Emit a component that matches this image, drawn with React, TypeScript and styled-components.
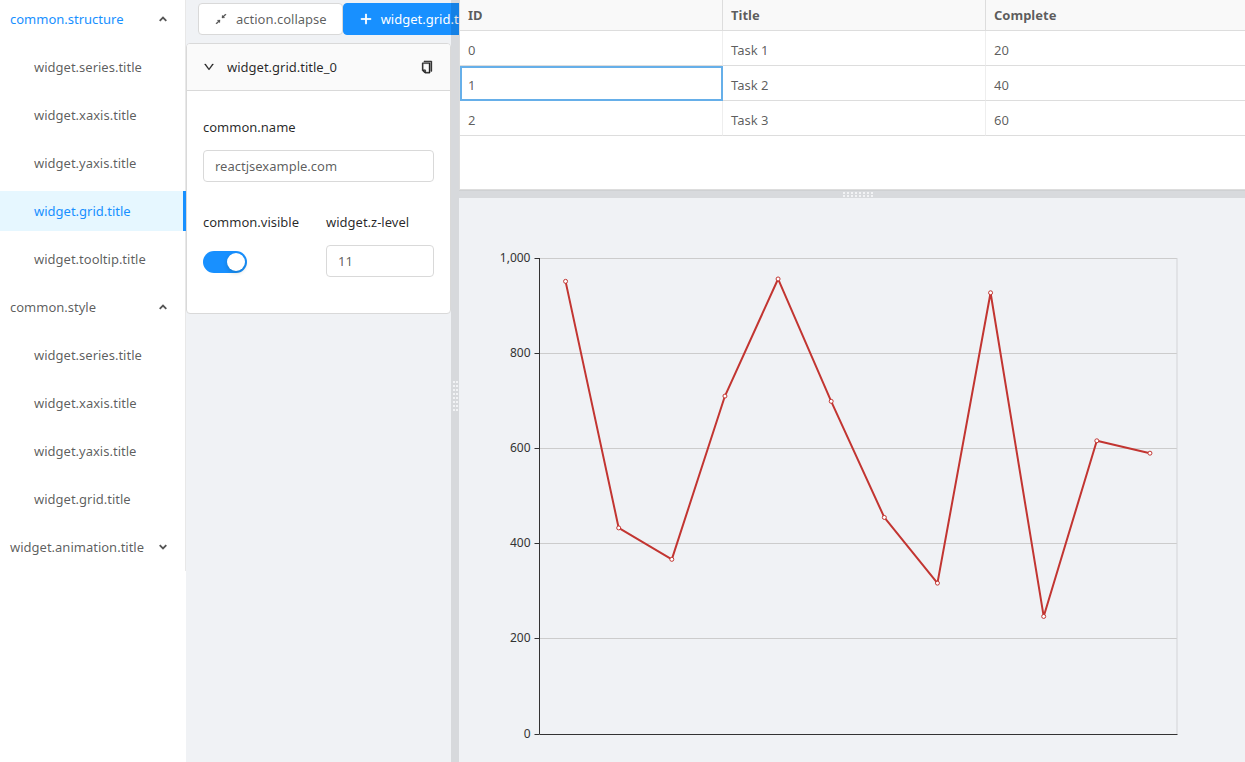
import React, { useEffect, useRef, useState } from 'react';
import styled, { createGlobalStyle } from 'styled-components';
import { AiOutlineCopy, AiOutlineDown, AiOutlinePlus, AiOutlineShrink } from 'react-icons/ai';

const GlobalStyle = createGlobalStyle`
  *, *::before, *::after { box-sizing: border-box; }
  body {
    margin: 0;
    overflow: hidden;
    background: #f0f2f5;
  }
  body, button, input {
    font-family: 'Noto Sans', 'Noto Sans CJK SC', sans-serif;
    font-size: 13px;
    line-height: 20px;
    color: rgba(0, 0, 0, 0.65);
  }
`;

const Shell = styled.div`
  height: 100vh;
  overflow: hidden;
`;

/* The workspace is a little larger than the window; the shell clips it. */
const Workspace = styled.div`
  display: flex;
  width: calc(100% + 12px);
  height: calc(100% + 30px);
`;

/* ---------- menu ---------- */

const Sidebar = styled.nav`
  flex: none;
  width: 186px;
  background: #fff;
`;

const Menu = styled.ul`
  list-style: none;
  margin: -1px 0 0;
  padding: 0 0 4px;
  display: grid;
  gap: 8px;
  border-right: 1px solid #e8e8e8;
`;

const SubMenu = styled.ul`
  list-style: none;
  margin: 8px 0 0;
  padding: 0;
  display: grid;
  gap: 8px;
`;

const MenuTitle = styled.button<{ $active?: boolean }>`
  display: flex;
  align-items: center;
  justify-content: space-between;
  width: 100%;
  height: 40px;
  padding: 0 18px 0 10px;
  border: 0;
  background: none;
  cursor: pointer;
  color: ${(p) => (p.$active ? '#1890ff' : 'rgba(0, 0, 0, 0.65)')};
`;

const MenuItem = styled.a<{ $selected?: boolean }>`
  display: flex;
  align-items: center;
  height: 40px;
  padding-left: 34px;
  text-decoration: none;
  color: ${(p) => (p.$selected ? '#1890ff' : 'rgba(0, 0, 0, 0.65)')};
  background: ${(p) => (p.$selected ? '#e6f7ff' : 'transparent')};
  ${(p) => p.$selected && 'margin-right: -1px; border-right: 3px solid #1890ff;'}
`;

const ArrowSvg = styled.svg<{ $open: boolean }>`
  transform: ${(p) => (p.$open ? 'none' : 'rotate(180deg)')};
`;

const Arrow = ({ open }: { open: boolean }) => (
  <ArrowSvg $open={open} width="8" height="6" viewBox="0 0 8 6" aria-hidden="true">
    <path d="M0.7 4.8 L4 1.5 L7.3 4.8" fill="none" stroke="#555" strokeWidth="1.8" />
  </ArrowSvg>
);

/* ---------- settings pane ---------- */

const SettingsPane = styled.section`
  position: relative;
  flex: none;
  width: 273px;
  padding-right: 8px;
  overflow: hidden;
`;

const Toolbar = styled.div`
  display: flex;
  padding: 3px 0 8px 12px;
`;

const ToolButton = styled.button<{ $primary?: boolean }>`
  flex: none;
  display: flex;
  align-items: center;
  gap: 8px;
  height: 32px;
  padding: 0 15px;
  border: 1px solid ${(p) => (p.$primary ? '#1890ff' : '#d9d9d9')};
  border-radius: 4px;
  background: ${(p) => (p.$primary ? '#1890ff' : '#fff')};
  color: ${(p) => (p.$primary ? '#fff' : 'rgba(0, 0, 0, 0.65)')};
  white-space: nowrap;
  cursor: pointer;

  svg {
    stroke-width: ${(p) => (p.$primary ? '60px' : '20px')};
  }
`;

const Card = styled.article`
  border: 1px solid #d9d9d9;
  border-radius: 4px;
  background: #fff;
  overflow: hidden;
`;

const CardHeader = styled.header`
  display: flex;
  align-items: center;
  justify-content: space-between;
  height: 47px;
  padding: 0 16px;
  border-bottom: 1px solid #d9d9d9;
  background: #fafafa;

  svg {
    stroke-width: 30px;
  }
`;

const CardToggle = styled.button`
  display: flex;
  align-items: center;
  gap: 12px;
  padding: 0;
  border: 0;
  background: none;
  color: rgba(0, 0, 0, 0.85);
  cursor: pointer;
`;

const IconButton = styled.button`
  display: flex;
  padding: 0;
  border: 0;
  background: none;
  color: rgba(0, 0, 0, 0.85);
  cursor: pointer;
`;

const CardBody = styled.form`
  display: grid;
  grid-template-columns: 1fr 1fr;
  gap: 20px 15px;
  padding: 16px 16px 36px;
`;

const Field = styled.div<{ $wide?: boolean }>`
  display: grid;
  align-content: start;
  justify-items: start;
  min-width: 0;
  ${(p) => p.$wide && 'grid-column: 1 / -1;'}
`;

const Label = styled.label`
  height: 40px;
  margin-bottom: 3px;
  line-height: 40px;
  color: rgba(0, 0, 0, 0.85);
  white-space: nowrap;
`;

const TextInput = styled.input`
  width: 100%;
  height: 32px;
  padding: 4px 11px;
  border: 1px solid #d9d9d9;
  border-radius: 4px;
  background: #fff;
`;

const Switch = styled.input`
  appearance: none;
  width: 44px;
  height: 22px;
  margin: 6px 0 0;
  padding: 2px;
  display: flex;
  justify-content: flex-start;
  border-radius: 11px;
  background: #bfbfbf;
  cursor: pointer;
  &::before {
    content: '';
    width: 18px;
    height: 18px;
    border-radius: 50%;
    background: #fff;
    box-shadow: 0 2px 4px rgba(0, 35, 11, 0.2);
  }
  &:checked {
    justify-content: flex-end;
    background: #1890ff;
  }
`;

/* ---------- splitters ---------- */

const SplitterColumn = styled.div`
  position: absolute;
  top: 0;
  right: 0;
  bottom: 0;
  width: 8px;
  display: flex;
  align-items: center;
  justify-content: center;
  background: rgba(0, 0, 0, 0.1);
  cursor: col-resize;
`;

const SplitterRow = styled.div`
  flex: none;
  height: 8px;
  display: flex;
  align-items: center;
  justify-content: center;
  border-top: 1px solid #cfd1d3;
  background: #d8dadd;
  cursor: row-resize;
`;

const Grip = ({ columns, rows }: { columns: number; rows: number }) => {
  const stepX = columns > rows ? 4 : 3;
  const stepY = columns > rows ? 3 : 4;
  const w = (columns - 1) * stepX + 2;
  const h = (rows - 1) * stepY + 2;
  return (
    <svg width={w} height={h} shapeRendering="crispEdges" aria-hidden="true">
      {Array.from({ length: columns * rows }, (_, i) => (
        <rect
          key={i}
          x={(i % columns) * stepX}
          y={Math.floor(i / columns) * stepY}
          width="2"
          height="2"
          fill="#f2f3f5"
        />
      ))}
    </svg>
  );
};

/* ---------- data grid ---------- */

const Main = styled.main`
  flex: 1;
  min-width: 0;
  display: flex;
  flex-direction: column;
`;

const GridPane = styled.section`
  flex: none;
  height: 190px;
  border: solid #ddd;
  border-width: 0 0 1px 1px;
  background: #fff;
  overflow: hidden;
`;

const Table = styled.table`
  width: 100%;
  table-layout: fixed;
  border-spacing: 0;
`;

const Column = styled.col`
  width: 263px;
`;

const HeadCell = styled.th`
  height: 31px;
  padding: 0 8px;
  border: solid #ddd;
  border-width: 0 1px 1px 0;
  background: #f9f9f9;
  font-weight: 700;
  text-align: left;
`;

const Cell = styled.td<{ $selected?: boolean }>`
  height: 35px;
  padding: 4px 8px 0;
  border: solid #ddd;
  border-width: 0 1px 1px 0;
  border-right-color: #eee;
  ${(p) => p.$selected && 'outline: 2px solid #66afe9; outline-offset: -2px;'}
`;

/* ---------- chart ---------- */

const ChartPane = styled.section`
  flex: 1;
  min-height: 0;
  overflow: hidden;
`;

const ChartSvg = styled.svg`
  display: block;
  width: 100%;
  height: 100%;
  font-size: 12px;
`;

const series = [952, 434, 368, 711, 957, 700, 456, 318, 928, 248, 617, 591];
const ticks = [0, 200, 400, 600, 800, 1000];

function LineChart() {
  const ref = useRef<HTMLElement>(null);
  const [size, setSize] = useState({ width: 798, height: 594 });

  useEffect(() => {
    const el = ref.current;
    if (!el) return;
    const observer = new ResizeObserver(() =>
      setSize({ width: el.clientWidth, height: el.clientHeight }),
    );
    observer.observe(el);
    return () => observer.disconnect();
  }, []);

  const left = Math.round(size.width * 0.1) + 0.5;
  const right = size.width - left + 0.5;
  const top = 60;
  const bottom = size.height - 58;
  const y = (v: number) => bottom - ((bottom - top) * v) / 1000;
  const band = (right - left) / series.length;
  const points = series.map((v, i) => [left - 0.5 + band * (i + 0.5), y(v) + 0.5]);

  return (
    <ChartPane ref={ref}>
      <ChartSvg role="img" aria-label="Line chart">
        {ticks.map((t) => {
          const ty = Math.floor(y(t)) + 0.5;
          return (
            <g key={t}>
              {t > 0 && <line x1={left} x2={right} y1={ty} y2={ty} stroke="#ccc" />}
              <line x1={left - 5} x2={left} y1={ty} y2={ty} stroke="#333" />
              <text x={left - 9} y={ty + 3} textAnchor="end" fill="#333">
                {t.toLocaleString('en-US')}
              </text>
            </g>
          );
        })}
        <line x1={right} x2={right} y1={top} y2={bottom} stroke="#d3d4d7" />
        <line x1={left} x2={left} y1={top} y2={bottom} stroke="#333" />
        <line x1={left} x2={right + 0.5} y1={bottom + 0.5} y2={bottom + 0.5} stroke="#333" />
        <polyline
          points={points.map((p) => p.join(',')).join(' ')}
          fill="none"
          stroke="#c23531"
          strokeWidth="2"
          strokeLinejoin="bevel"
        />
        {points.map(([cx, cy]) => (
          <circle key={cx} cx={cx} cy={cy} r="2" fill="#fff" stroke="#c23531" />
        ))}
      </ChartSvg>
    </ChartPane>
  );
}

/* ---------- page ---------- */

const menu = [
  {
    title: 'common.structure',
    active: true,
    items: [
      'widget.series.title',
      'widget.xaxis.title',
      'widget.yaxis.title',
      'widget.grid.title',
      'widget.tooltip.title',
    ],
    selected: 3,
  },
  {
    title: 'common.style',
    items: ['widget.series.title', 'widget.xaxis.title', 'widget.yaxis.title', 'widget.grid.title'],
  },
  { title: 'widget.animation.title', items: [] },
];

const rows = [
  { id: 0, title: 'Task 1', complete: 20 },
  { id: 1, title: 'Task 2', complete: 40 },
  { id: 2, title: 'Task 3', complete: 60 },
];

export default function App() {
  return (
    <Shell>
      <GlobalStyle />
      <Workspace>
        <Sidebar>
          <Menu>
            {menu.map((group) => (
              <li key={group.title}>
                <MenuTitle
                  type="button"
                  $active={group.active}
                  aria-expanded={group.items.length > 0}
                >
                  {group.title}
                  <Arrow open={group.items.length > 0} />
                </MenuTitle>
                {group.items.length > 0 && (
                  <SubMenu>
                    {group.items.map((item, i) => (
                      <li key={item}>
                        <MenuItem href="#" $selected={i === group.selected}>
                          {item}
                        </MenuItem>
                      </li>
                    ))}
                  </SubMenu>
                )}
              </li>
            ))}
          </Menu>
        </Sidebar>

        <SettingsPane>
          <Toolbar>
            <ToolButton type="button">
              <AiOutlineShrink size={14} />
              action.collapse
            </ToolButton>
            <ToolButton type="button" $primary>
              <AiOutlinePlus size={14} />
              widget.grid.title
            </ToolButton>
          </Toolbar>
          <Card>
            <CardHeader>
              <CardToggle type="button" aria-expanded>
                <AiOutlineDown size={12} />
                widget.grid.title_0
              </CardToggle>
              <IconButton type="button" aria-label="Copy">
                <AiOutlineCopy size={14} />
              </IconButton>
            </CardHeader>
            <CardBody>
              <Field $wide>
                <Label htmlFor="name">common.name</Label>
                <TextInput id="name" type="text" defaultValue="reactjsexample.com" />
              </Field>
              <Field>
                <Label htmlFor="visible">common.visible</Label>
                <Switch id="visible" type="checkbox" role="switch" defaultChecked />
              </Field>
              <Field>
                <Label htmlFor="z-level">widget.z-level</Label>
                <TextInput id="z-level" type="text" inputMode="numeric" defaultValue="11" />
              </Field>
            </CardBody>
          </Card>
          <SplitterColumn role="separator" aria-orientation="vertical">
            <Grip columns={2} rows={8} />
          </SplitterColumn>
        </SettingsPane>

        <Main>
          <GridPane>
            <Table>
              <colgroup>
                <Column />
                <Column />
                <col />
              </colgroup>
              <thead>
                <tr>
                  <HeadCell scope="col">ID</HeadCell>
                  <HeadCell scope="col">Title</HeadCell>
                  <HeadCell scope="col">Complete</HeadCell>
                </tr>
              </thead>
              <tbody>
                {rows.map((row) => (
                  <tr key={row.id}>
                    <Cell $selected={row.id === 1}>{row.id}</Cell>
                    <Cell>{row.title}</Cell>
                    <Cell>{row.complete}</Cell>
                  </tr>
                ))}
              </tbody>
            </Table>
          </GridPane>
          <SplitterRow role="separator" aria-orientation="horizontal">
            <Grip columns={8} rows={2} />
          </SplitterRow>
          <LineChart />
        </Main>
      </Workspace>
    </Shell>
  );
}
